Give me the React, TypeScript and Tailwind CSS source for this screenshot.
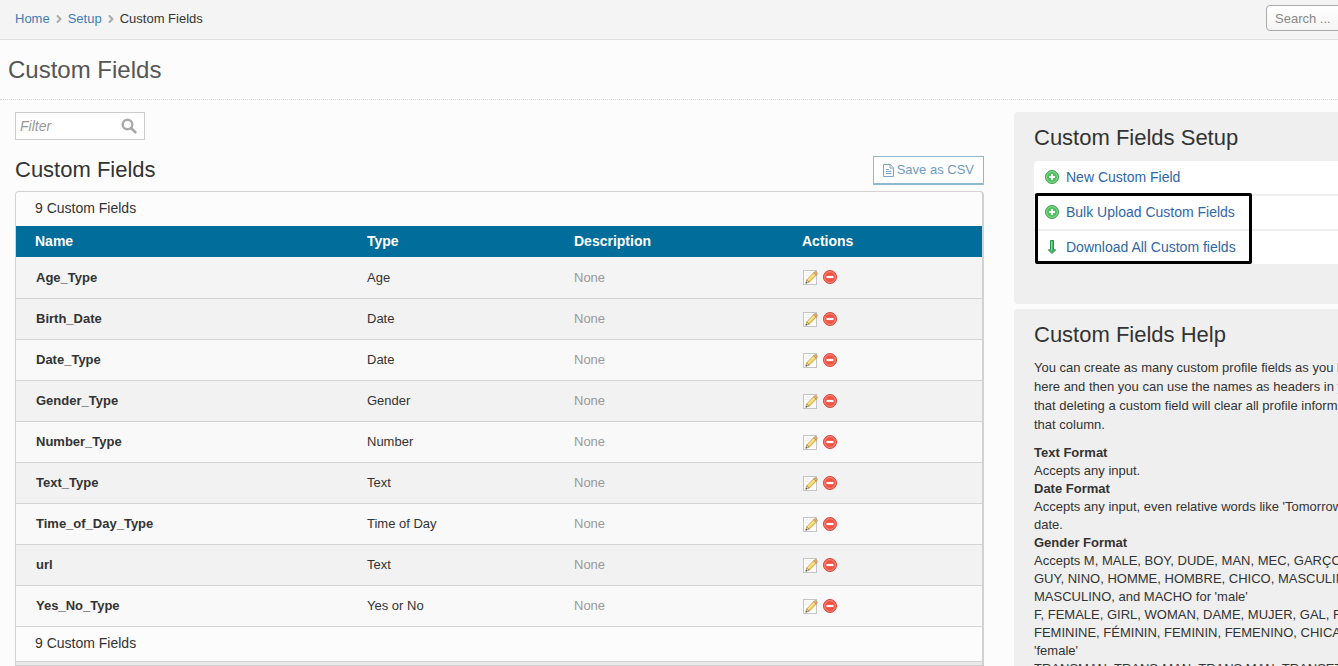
import { ChevronRight } from 'lucide-react';

const fields = [
  { name: 'Age_Type', type: 'Age' },
  { name: 'Birth_Date', type: 'Date' },
  { name: 'Date_Type', type: 'Date' },
  { name: 'Gender_Type', type: 'Gender' },
  { name: 'Number_Type', type: 'Number' },
  { name: 'Text_Type', type: 'Text' },
  { name: 'Time_of_Day_Type', type: 'Time of Day' },
  { name: 'url', type: 'Text' },
  { name: 'Yes_No_Type', type: 'Yes or No' },
];

const setupLinks = [
  { label: 'New Custom Field', icon: 'add' },
  { label: 'Bulk Upload Custom Fields', icon: 'add' },
  { label: 'Download All Custom fields', icon: 'download' },
];

const intro = [
  'You can create as many custom profile fields as you like',
  'here and then you can use the names as headers in your',
  'that deleting a custom field will clear all profile information in',
  'that column.',
];

const formats = [
  { title: 'Text Format', lines: ['Accepts any input.'] },
  {
    title: 'Date Format',
    lines: ["Accepts any input, even relative words like 'Tomorrow' as a", 'date.'],
  },
  {
    title: 'Gender Format',
    lines: [
      'Accepts M, MALE, BOY, DUDE, MAN, MEC, GARÇON,',
      'GUY, NINO, HOMME, HOMBRE, CHICO, MASCULIN,',
      "MASCULINO, and MACHO for 'male'",
      'F, FEMALE, GIRL, WOMAN, DAME, MUJER, GAL, FILLE,',
      'FEMININE, FÉMININ, FEMININ, FEMENINO, CHICA for',
      "'female'",
      'TRANSMAN, TRANS-MAN, TRANS MAN, TRANSETERO',
    ],
  },
];

function AddIcon() {
  return (
    <svg className="h-4 w-4" viewBox="0 0 16 16" aria-hidden="true">
      <circle cx="8" cy="8" r="6.5" fill="#4fbf60" stroke="#3a9e4b" />
      <circle cx="8" cy="8" r="5.4" fill="none" stroke="#9be0a4" strokeWidth="0.8" />
      <path d="M8 5v6M5 8h6" stroke="#fff" strokeWidth="2" />
    </svg>
  );
}

function DownloadIcon() {
  return (
    <svg className="h-4 w-4" viewBox="0 0 16 16" aria-hidden="true">
      <path
        d="M6.5 1.5h3v9.3h2.2L8 14.6l-3.7-3.8h2.2z"
        fill="#46b96a"
        stroke="#218a43"
        strokeWidth="0.9"
        strokeLinejoin="round"
      />
      <path d="M7.6 2.2v9.5" stroke="#8fdca6" strokeWidth="0.9" />
    </svg>
  );
}

function EditIcon() {
  return (
    <svg className="h-4 w-4" viewBox="0 0 16 16" aria-hidden="true">
      <rect x="1.5" y="1.5" width="13" height="14" fill="#fdfdfd" stroke="#c4c4c4" />
      <path d="M3 4h6M3 6.5h4" stroke="#ececec" />
      <path d="M4.6 11l7-7.2 2.6 2.4-7 7z" fill="#f3cf5b" stroke="#b8923c" strokeWidth="0.7" />
      <path d="M6 11.2l6.6-6.6" stroke="#fbeaa5" strokeWidth="1.1" />
      <path d="M11.6 3.8l1.2-1.2q2-.2 2.6 2l-1.2 1.6z" fill="#e3b08c" stroke="#a97f2c" strokeWidth="0.6" />
      <path d="M4.6 11l2.6 2.2-3.4 1z" fill="#ecd9b4" stroke="#8a6a2c" strokeWidth="0.5" />
      <path d="M3.6 14.4l.5-1.6 1.2 1.1z" fill="#333" />
    </svg>
  );
}

function DeleteIcon() {
  return (
    <svg className="h-4 w-4" viewBox="0 0 16 16" aria-hidden="true">
      <circle cx="8" cy="8" r="6.5" fill="#ef5344" stroke="#d8453b" />
      <circle cx="8" cy="8" r="5.4" fill="none" stroke="#f79a8c" strokeWidth="0.8" />
      <rect x="4.5" y="6.9" width="7" height="2.2" fill="#fff" />
    </svg>
  );
}

function FileIcon() {
  return (
    <svg className="h-[13px] w-[11px]" viewBox="0 0 11 13" fill="none" stroke="#7ba3c4" aria-hidden="true">
      <path d="M.5.5h6.7l3.3 3.3v8.7H.5z" />
      <path d="M7 .5v3.5h3.5M3 5.5h3M3 7.5h5.5M3 9.5h5.5" />
    </svg>
  );
}

export default function App() {
  return (
    <div className="h-screen overflow-hidden bg-[#fcfcfc] font-['Liberation_Sans',Arial,sans-serif] text-[13px] text-[#333]">
      <header className="flex h-10 items-center justify-between overflow-hidden border-b border-[#e0e0e0] bg-[#f4f4f4] pb-1 pl-[15px]">
        <nav aria-label="Breadcrumb" className="flex items-center gap-[3px] pt-[2px]">
          <a href="#home" className="text-[#3f7db8]">Home</a>
          <ChevronRight className="h-3 w-3 text-[#aaa]" strokeWidth={4} />
          <a href="#setup" className="text-[#3f7db8]">Setup</a>
          <ChevronRight className="h-3 w-3 text-[#aaa]" strokeWidth={4} />
          <span>Custom Fields</span>
        </nav>
        <form className="w-[72px]">
          <input
            type="text"
            aria-label="Search"
            placeholder="Search ..."
            className="h-[26px] w-40 rounded border border-[#aaa] bg-linear-to-b from-white to-[#f4f4f4] px-2 pt-[2px] placeholder:text-[#888]"
          />
        </form>
      </header>

      <div className="flex h-[60px] items-center border-b border-dotted border-[#d4d4d4] pl-2">
        <h1 className="text-2xl text-[#555]">Custom Fields</h1>
      </div>

      <div className="flex items-start pt-3">
        <main className="min-w-0 flex-1 pr-[30px] pl-[15px]">
          <label className="flex h-7 w-[130px] items-center border border-[#ccc] bg-white pr-[7px] pl-1">
            <input
              type="text"
              aria-label="Filter"
              placeholder="Filter"
              className="w-full min-w-0 text-sm italic outline-none placeholder:text-[#999]"
            />
            <svg className="h-4 w-4 shrink-0" viewBox="0 0 16 16" fill="none" stroke="#aaa" aria-hidden="true">
              <circle cx="6.5" cy="6.5" r="4.8" strokeWidth="2.4" />
              <path d="M10.3 10.3l4 4" strokeWidth="2.8" strokeLinecap="round" />
            </svg>
          </label>

          <div className="mt-4 flex items-start justify-between">
            <h2 className="text-[22px] leading-7">Custom Fields</h2>
            <button
              type="button"
              className="flex h-[29px] items-center gap-[3px] border border-b-2 border-[#8fb8d2] bg-white px-[9px] text-[#6f9abf]"
            >
              <FileIcon />
              Save as CSV
            </button>
          </div>

          <section className="mt-[6px] rounded-t border border-r-2 border-[#d2d2d2]">
            <p className="h-[34px] pl-[19px] text-sm leading-8">9 Custom Fields</p>
            <table className="w-full table-fixed border-collapse text-left">
              <thead>
                <tr className="h-[31px] bg-[#006d9a] text-sm text-white">
                  <th className="w-[351px] pb-[2px] pl-[19px]">Name</th>
                  <th className="w-[207px] pb-[2px]">Type</th>
                  <th className="w-[228px] pb-[2px]">Description</th>
                  <th className="pb-[2px]">Actions</th>
                </tr>
              </thead>
              <tbody>
                {fields.map((field) => (
                  <tr key={field.name} className="h-[41px] border-b border-[#d4d4d4] odd:bg-[#f9f9f9] even:bg-[#f2f2f2] first:bg-[#f4f4f4]!">
                    <td className="pl-5 font-bold">{field.name}</td>
                    <td>{field.type}</td>
                    <td className="text-[#999]">None</td>
                    <td>
                      <div className="flex items-center gap-1">
                        <button type="button" aria-label={`Edit ${field.name}`}>
                          <EditIcon />
                        </button>
                        <button type="button" aria-label={`Delete ${field.name}`}>
                          <DeleteIcon />
                        </button>
                      </div>
                    </td>
                  </tr>
                ))}
              </tbody>
            </table>
            <p className="h-[34px] pl-[19px] text-sm leading-8">9 Custom Fields</p>
            <div className="h-[5px] border-y border-[#d2d2d2] bg-[#eaeaea]" />
          </section>
        </main>

        {/* Sidebar runs past the right edge of the window */}
        <aside className="flex w-[324px] shrink-0 flex-col gap-[5px] overflow-hidden">
          <section className="h-48 rounded-l bg-[#efefef] pt-3 pl-5">
            <h2 className="text-[22px] leading-7">Custom Fields Setup</h2>
            <div className="relative mt-[9px]">
              <ul className="flex flex-col gap-[2px] text-sm">
                {setupLinks.map((link) => (
                  <li key={link.label} className="bg-white first:rounded-tl">
                    <a href="#setup" className="flex h-[33px] items-center gap-[6px] pb-[2px] pl-[10px] text-[#2f67a8]">
                      {link.icon === 'add' ? <AddIcon /> : <DownloadIcon />}
                      {link.label}
                    </a>
                  </li>
                ))}
              </ul>
              {/* Highlight around the bulk actions */}
              <div className="pointer-events-none absolute top-8 left-px h-[71px] w-[217px] rounded-xs border-3 border-black" />
            </div>
          </section>

          <section className="rounded-tl bg-[#efefef] pt-3 pl-5 whitespace-nowrap">
            <h2 className="text-[22px] leading-7">Custom Fields Help</h2>
            <p className="mt-[9px] leading-[19px]">
              {intro.map((line) => (
                <span key={line} className="block">{line}</span>
              ))}
            </p>
            <dl className="mt-[10px] leading-[18px]">
              {formats.map((format) => (
                <div key={format.title}>
                  <dt className="font-bold">{format.title}</dt>
                  {format.lines.map((line) => (
                    <dd key={line}>{line}</dd>
                  ))}
                </div>
              ))}
            </dl>
          </section>
        </aside>
      </div>
    </div>
  );
}
